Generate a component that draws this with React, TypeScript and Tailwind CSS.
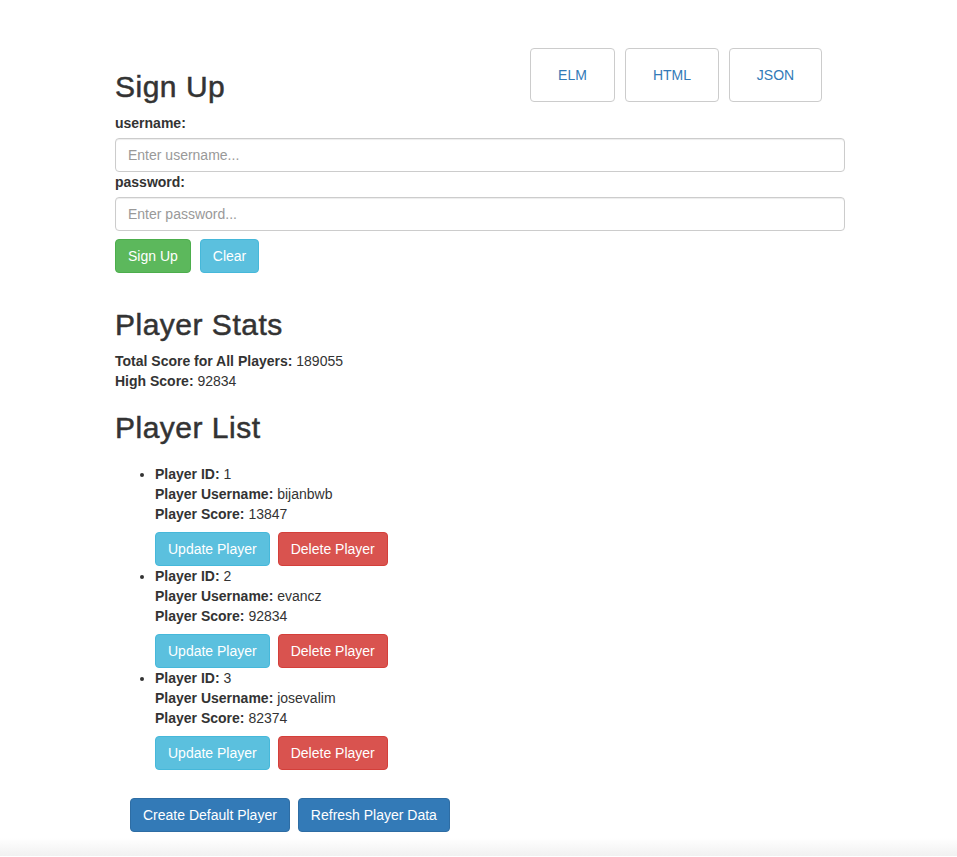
import React from "react";

const players = [
  { id: 1, username: "bijanbwb", score: 13847 },
  { id: 2, username: "evancz", score: 92834 },
  { id: 3, username: "josevalim", score: 82374 },
];

const btn =
  "h-[34px] px-3 rounded-[4px] border text-[14px] leading-[20px] text-white";

const h2 =
  "text-[30px] leading-[33px] font-medium tracking-[0.5px] [-webkit-text-stroke:0.5px_#333]";

export default function App() {
  return (
    <div
      className="w-full bg-white text-[#333] text-[14px] leading-[20px]"
      style={{ fontFamily: '"Liberation Sans", Arial, sans-serif' }}
    >
      <div className="ml-[115px] w-[730px] pt-[48px]">
        <div className="flex justify-between items-start">
          <h2 className={`mt-[22px] mb-[10px] ${h2}`}>Sign Up</h2>
          <div className="flex gap-[10px] mr-[23px]">
            {[
              { t: "ELM", w: "w-[85px]" },
              { t: "HTML", w: "w-[94px]" },
              { t: "JSON", w: "w-[93px]" },
            ].map(({ t, w }) => (
              <button
                key={t}
                className={`h-[54px] ${w} rounded-[4px] border border-[#ccc] bg-white text-[#337ab7] text-[14px]`}
              >
                {t}
              </button>
            ))}
          </div>
        </div>
        <div>
          <label className="block font-bold mb-[5px]">username:</label>
          <input
            className="block w-full h-[34px] px-3 border border-[#ccc] rounded-[4px] shadow-[inset_0_1px_1px_rgba(0,0,0,0.075)] placeholder:text-[#999] text-[14px] outline-none"
            placeholder="Enter username..."
          />
          <label className="block font-bold mb-[5px]">password:</label>
          <input
            className="block w-full h-[34px] px-3 border border-[#ccc] rounded-[4px] shadow-[inset_0_1px_1px_rgba(0,0,0,0.075)] placeholder:text-[#999] text-[14px] outline-none"
            placeholder="Enter password..."
          />
          <div className="flex gap-[9px] mt-[8px]">
            <button className={`${btn} bg-[#5cb85c] border-[#4cae4c]`}>
              Sign Up
            </button>
            <button className={`${btn} bg-[#5bc0de] border-[#46b8da]`}>
              Clear
            </button>
          </div>
        </div>

        <h2 className={`mt-[35px] mb-[10px] ${h2}`}>Player Stats</h2>
        <div>
          <b>Total Score for All Players:</b> 189055
        </div>
        <div>
          <b>High Score:</b> 92834
        </div>

        <h2 className={`mt-[20px] mb-[20px] ${h2}`}>Player List</h2>
        <ul className="list-disc pl-10">
          {players.map((p) => (
            <li key={p.id}>
              <div>
                <b>Player ID:</b> {p.id}
              </div>
              <div>
                <b>Player Username:</b> {p.username}
              </div>
              <div>
                <b>Player Score:</b> {p.score}
              </div>
              <div className="flex gap-[8px] mt-[8px]">
                <button className={`${btn} bg-[#5bc0de] border-[#46b8da]`}>
                  Update Player
                </button>
                <button className={`${btn} bg-[#d9534f] border-[#d43f3a]`}>
                  Delete Player
                </button>
              </div>
            </li>
          ))}
        </ul>

        <div className="flex gap-[8px] ml-[15px] mt-[28px]">
          <button className={`${btn} bg-[#337ab7] border-[#2e6da4]`}>
            Create Default Player
          </button>
          <button className={`${btn} bg-[#337ab7] border-[#2e6da4]`}>
            Refresh Player Data
          </button>
        </div>
      </div>
      <div className="mt-[6px] h-[18px] w-full bg-gradient-to-b from-white to-[#f1f1f1]" />
    </div>
  );
}
